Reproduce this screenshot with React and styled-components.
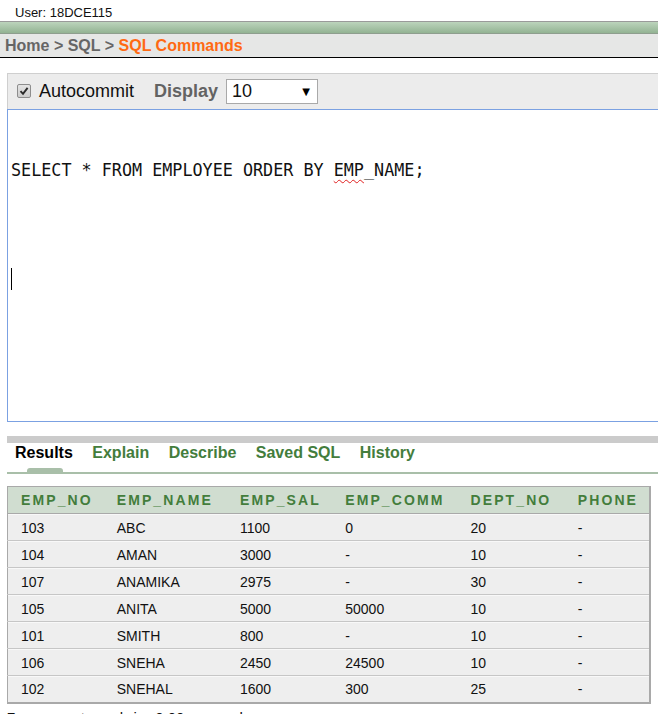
import React from "react";
import styled, { createGlobalStyle } from "styled-components";

const GlobalStyle = createGlobalStyle`
  html, body {
    margin: 0;
    padding: 0;
    background: #ffffff;
    overflow: hidden;
    font-family: "Liberation Sans", Arial, sans-serif;
  }
`;

const UserBar = styled.div`
  height: 21px;
  box-sizing: border-box;
  padding: 4px 0 0 15px;
  font-size: 13px;
  line-height: 17px;
  color: #111;
`;

const GreenBar = styled.div`
  height: 13px;
  box-sizing: border-box;
  border-top: 1px solid #9a9a9a;
  border-bottom: 1px solid #8e9e8e;
  background: linear-gradient(to bottom, #bcd4bc, #93b393);
`;

const Breadcrumb = styled.div`
  height: 24px;
  box-sizing: border-box;
  background: #e6e7e6;
  border-bottom: 1px solid #000;
  padding-left: 5px;
  font-size: 16px;
  font-weight: bold;
  line-height: 23px;
  color: #666;
`;

const Current = styled.span`
  color: #ff6a13;
`;

const Main = styled.div`
  padding: 15px 0 0 7px;
`;

const Toolbar = styled.div`
  height: 36px;
  box-sizing: border-box;
  border-top: 1px solid #cfcfcf;
  border-left: 1px solid #cfcfcf;
  background: #ececec;
  display: flex;
  align-items: center;
  padding-left: 9px;
`;

const CheckBox = styled.span`
  width: 14px;
  height: 14px;
  box-sizing: border-box;
  border: 1px solid #8d8d8d;
  border-radius: 2px;
  background: linear-gradient(to bottom, #e4e4e4, #cdcdcd);
  display: flex;
  align-items: center;
  justify-content: center;
  margin-top: -1px;
`;

const Label = styled.span`
  font-size: 18px;
  color: ${(p) => (p.$bold ? "#636363" : "#111")};
  font-weight: ${(p) => (p.$bold ? "bold" : "normal")};
  margin-left: ${(p) => p.$ml}px;
`;

const SelectBox = styled.div`
  width: 92px;
  height: 25px;
  box-sizing: border-box;
  margin-left: 8px;
  border: 1px solid #a9a9a9;
  background: #fff;
  display: flex;
  align-items: center;
  justify-content: space-between;
  padding: 0 7px 0 5px;
  font-size: 18px;
  color: #111;
`;

const Arrow = styled.span`
  font-family: "DejaVu Sans", sans-serif;
  font-size: 10px;
  color: #000;
`;

const Editor = styled.div`
  height: 313px;
  box-sizing: border-box;
  border: 1px solid #7ba1e2;
  border-right: none;
  background: #fff;
  padding: 49px 0 0 3px;
  font-family: "DejaVu Sans Mono", "Liberation Mono", monospace;
  font-size: 16.75px;
  line-height: 22px;
  color: #111;
`;

const CodeLine = styled.div`
  white-space: pre;
`;

const Squiggle = styled.span`
  text-decoration: underline wavy #e02020;
  text-decoration-thickness: 1px;
  text-underline-offset: 3px;
`;

const Caret = styled.div`
  width: 1px;
  height: 22px;
  background: #000;
  margin-top: 87px;
`;

const GrayBar = styled.div`
  height: 7px;
  margin-top: 14px;
  background: #cbcbcb;
`;

const TabRow = styled.div`
  height: 31px;
  box-sizing: border-box;
  border-bottom: 2px solid #a9bfa9;
  display: flex;
  gap: 19.5px;
  padding: 1px 0 0 8px;
  position: relative;
`;

const Tab = styled.span`
  font-size: 16px;
  font-weight: bold;
  line-height: 18px;
  color: ${(p) => (p.$active ? "#000" : "#437d3c")};
`;

const TabMark = styled.span`
  position: absolute;
  left: 20px;
  bottom: 0;
  width: 36px;
  height: 4px;
  border-radius: 3px 3px 0 0;
  background: #a9bfa9;
`;

const Table = styled.table`
  margin-top: 12px;
  width: 644px;
  border-collapse: collapse;
  table-layout: fixed;
  border-top: 1px solid #a9a9a9;
  border-left: 1px solid #a9a9a9;
  border-right: 2px solid #a9a9a9;
  border-bottom: 2px solid #a9a9a9;
`;

const Col = styled.col`
  width: ${(p) => p.$w}px;
`;

const HeadCell = styled.th`
  height: 27px;
  box-sizing: border-box;
  padding: 0 0 0 13px;
  text-align: left;
  background: #d0ddd0;
  border-bottom: 1px solid #a9a9a9;
  font-size: 14px;
  font-weight: bold;
  letter-spacing: 2.1px;
  color: #437d3c;
  white-space: nowrap;
`;

const Cell = styled.td`
  height: 27px;
  box-sizing: border-box;
  padding: 1px 0 0 13px;
  background: #eeeeee;
  border-top: 1px solid #c6c6c6;
  box-shadow: inset 0 1px 0 #f8f8f8;
  font-size: 14px;
  color: #111;
  white-space: nowrap;
`;

const Footer = styled.div`
  margin-top: 5px;
  font-size: 15px;
  word-spacing: 6px;
  color: #111;
`;

const columns = [
  ["EMP_NO", 96],
  ["EMP_NAME", 123],
  ["EMP_SAL", 105],
  ["EMP_COMM", 125],
  ["DEPT_NO", 107],
  ["PHONE", 85],
];

const rows = [
  ["103", "ABC", "1100", "0", "20", "-"],
  ["104", "AMAN", "3000", "-", "10", "-"],
  ["107", "ANAMIKA", "2975", "-", "30", "-"],
  ["105", "ANITA", "5000", "50000", "10", "-"],
  ["101", "SMITH", "800", "-", "10", "-"],
  ["106", "SNEHA", "2450", "24500", "10", "-"],
  ["102", "SNEHAL", "1600", "300", "25", "-"],
];

const tabs = ["Results", "Explain", "Describe", "Saved SQL", "History"];

const App = () => {
  return (
    <>
      <GlobalStyle />
      <UserBar>User: 18DCE115</UserBar>
      <GreenBar />
      <Breadcrumb>
        Home &gt; SQL &gt; <Current>SQL Commands</Current>
      </Breadcrumb>
      <Main>
        <Toolbar>
          <CheckBox>
            <svg width="10" height="10" viewBox="0 0 10 10">
              <path d="M1.5 5.2 L4 7.8 L8.6 1.8" fill="none" stroke="#2b2b2b" strokeWidth="1.9" />
            </svg>
          </CheckBox>
          <Label $ml={8}>Autocommit</Label>
          <Label $bold $ml={20}>Display</Label>
          <SelectBox>
            <span>10</span>
            <Arrow>▼</Arrow>
          </SelectBox>
        </Toolbar>
        <Editor>
          <CodeLine>
            SELECT * FROM EMPLOYEE ORDER BY <Squiggle>EMP</Squiggle>_NAME;
          </CodeLine>
          <Caret />
        </Editor>
        <GrayBar />
        <TabRow>
          {tabs.map((t, i) => (
            <Tab key={t} $active={i === 0}>{t}</Tab>
          ))}
          <TabMark />
        </TabRow>
        <Table>
          <colgroup>
            {columns.map(([name, w]) => (
              <Col key={name} $w={w} />
            ))}
          </colgroup>
          <thead>
            <tr>
              {columns.map(([name]) => (
                <HeadCell key={name}>{name}</HeadCell>
              ))}
            </tr>
          </thead>
          <tbody>
            {rows.map((r) => (
              <tr key={r[0]}>
                {r.map((v, i) => (
                  <Cell key={i}>{v}</Cell>
                ))}
              </tr>
            ))}
          </tbody>
        </Table>
        <Footer>7 rows returned in 0.00 seconds</Footer>
      </Main>
    </>
  );
};

export default App;
